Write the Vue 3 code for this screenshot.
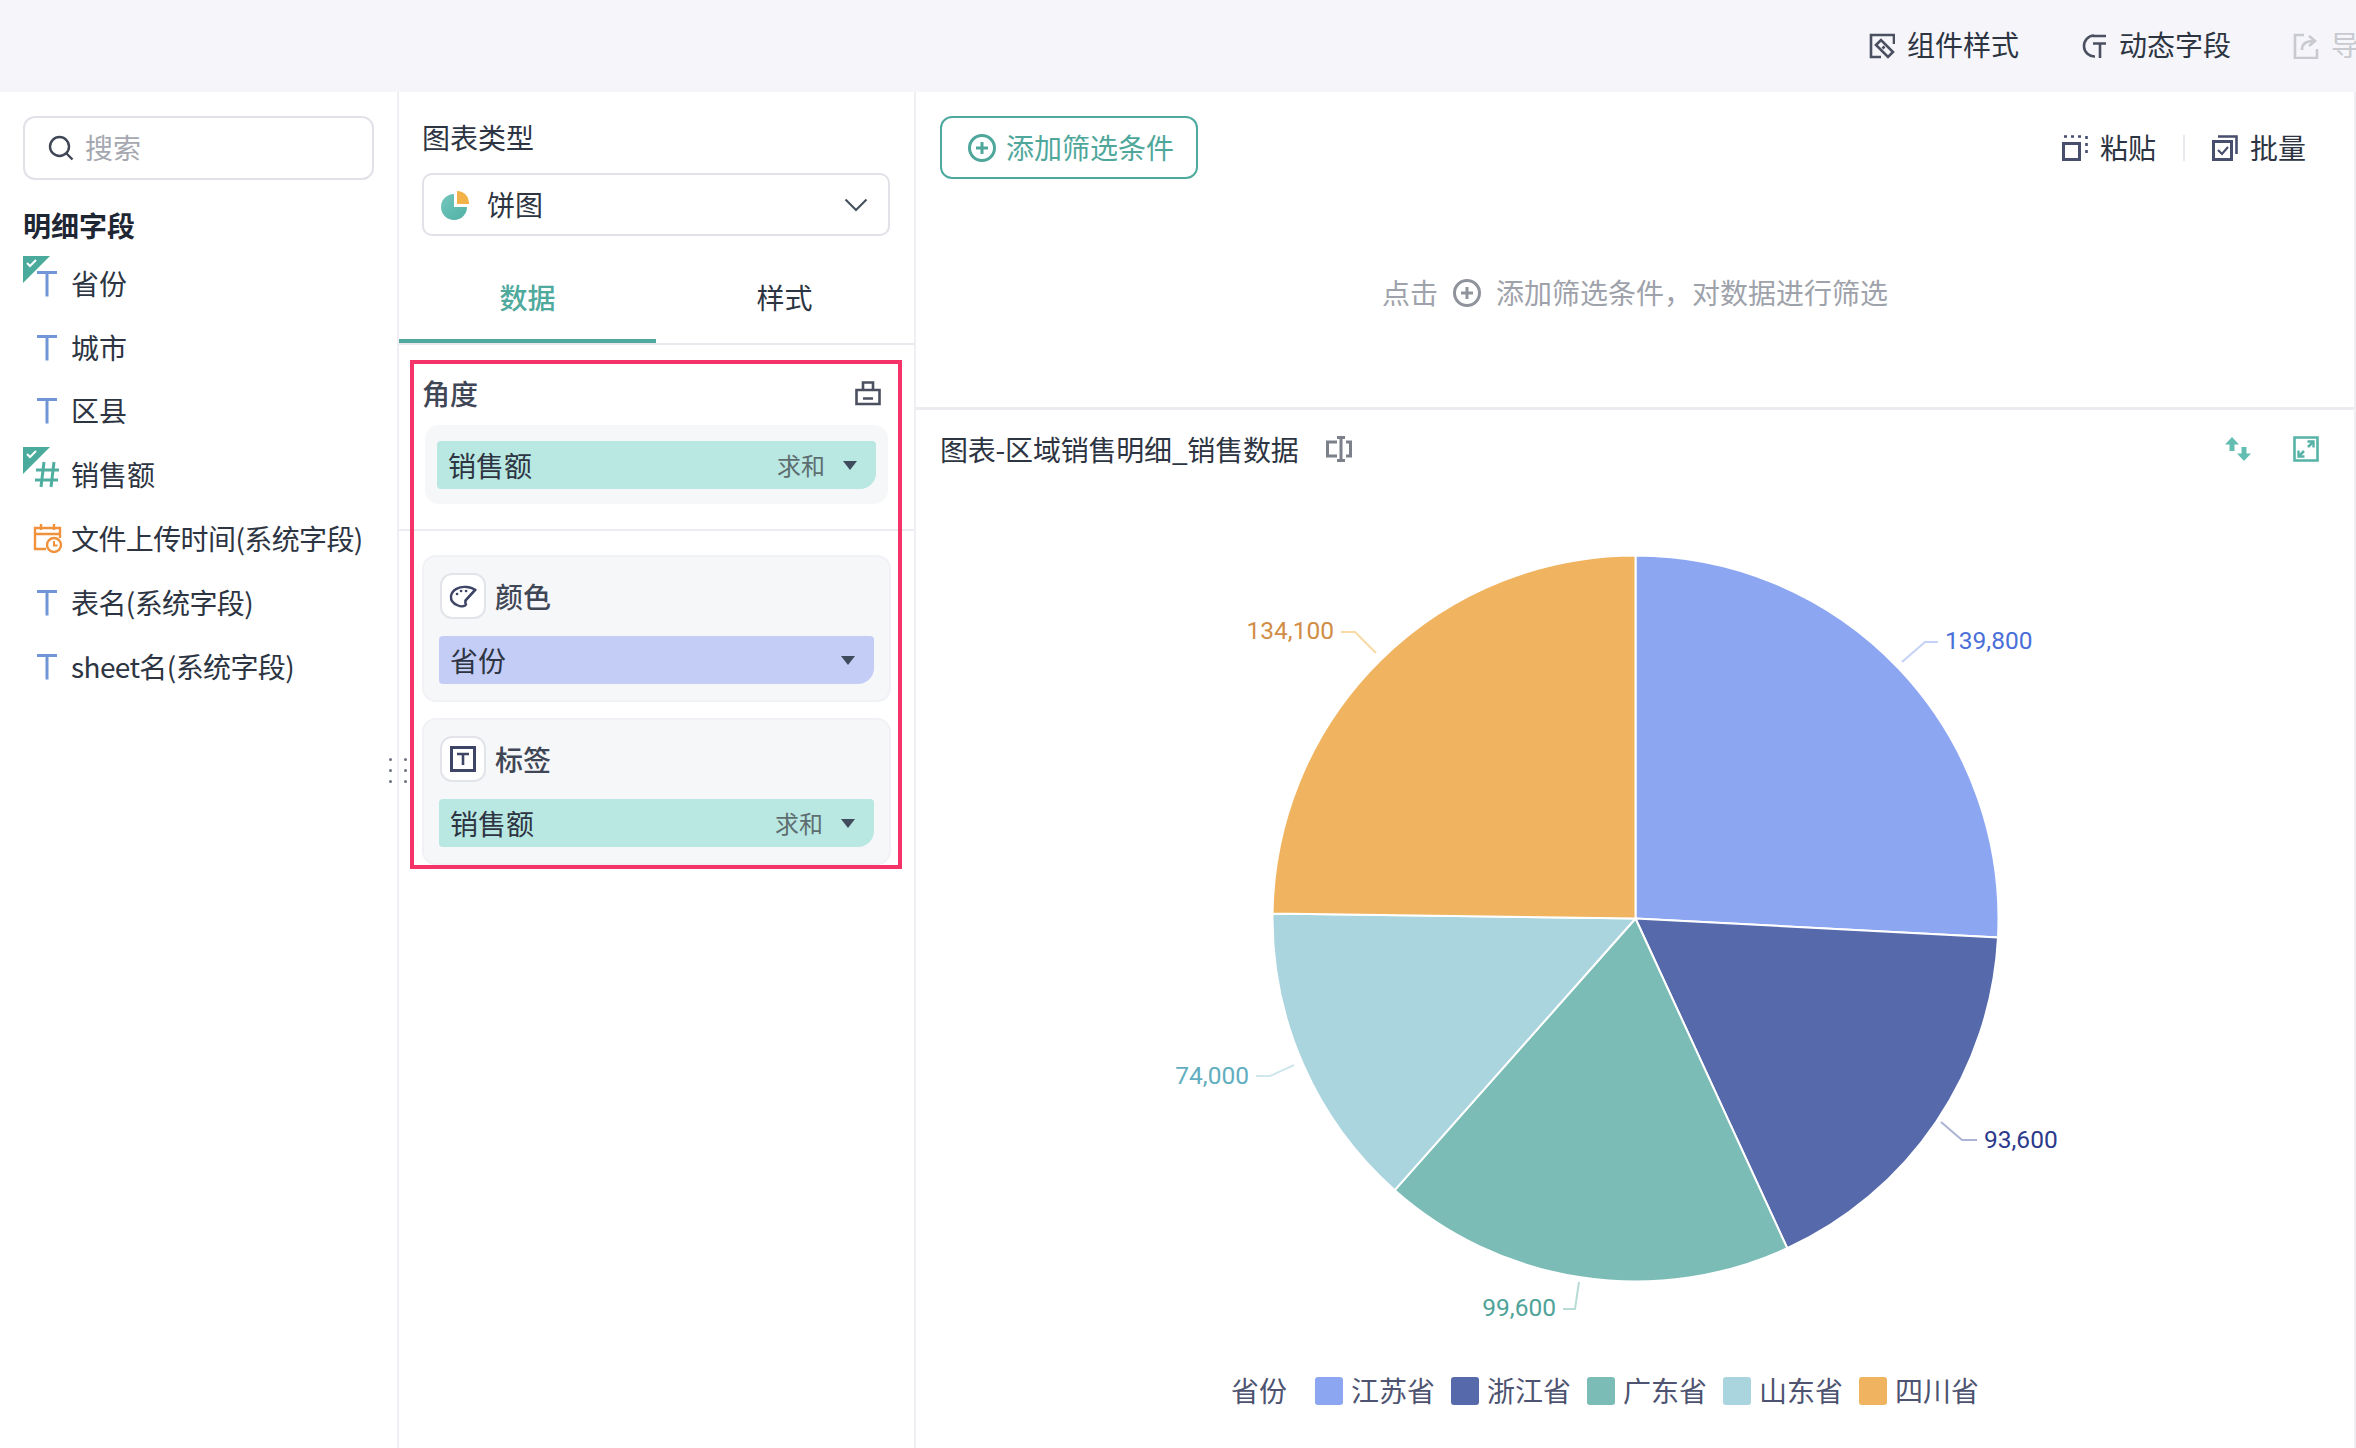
<script setup>
const fields = [
  { name: '省份', icon: 't', used: true },
  { name: '城市', icon: 't' },
  { name: '区县', icon: 't' },
  { name: '销售额', icon: 'hash', used: true },
  { name: '文件上传时间(系统字段)', icon: 'date', sys: true },
  { name: '表名(系统字段)', icon: 't', sys: true },
  { name: 'sheet名(系统字段)', icon: 't', sys: true }
]

const cx = 1635.5
const cy = 918.5
const r = 363
const data = [
  { name: '江苏省', value: 139800, color: '#8da6f2' },
  { name: '浙江省', value: 93600, color: '#5669ab' },
  { name: '广东省', value: 99600, color: '#7cbcb7' },
  { name: '山东省', value: 74000, color: '#abd5de' },
  { name: '四川省', value: 134100, color: '#f0b35f' }
]
const total = data.reduce((s, d) => s + d.value, 0)
let acc = 0
const slices = data.map((d) => {
  const a0 = (acc / total) * 2 * Math.PI
  acc += d.value
  const a1 = (acc / total) * 2 * Math.PI
  const p = (a) => `${(cx + r * Math.sin(a)).toFixed(2)} ${(cy - r * Math.cos(a)).toFixed(2)}`
  const large = a1 - a0 > Math.PI ? 1 : 0
  return { ...d, d: `M${cx} ${cy} L${p(a0)} A${r} ${r} 0 ${large} 1 ${p(a1)} Z` }
})

const labels = [
  { text: '139,800', x: 1945, y: 640, anchor: 'start', color: '#4a6fd8', line: '1902,662 1925,642 1938,642', lc: '#c5d2f8' },
  { text: '93,600', x: 1984, y: 1139, anchor: 'start', color: '#2c3a8c', line: '1941,1122 1962,1140 1977,1140', lc: '#aab4d4' },
  { text: '99,600', x: 1556, y: 1307, anchor: 'end', color: '#4fa398', line: '1563,1309 1575,1309 1579,1282', lc: '#b7dcd6' },
  { text: '74,000', x: 1249, y: 1075, anchor: 'end', color: '#61aec0', line: '1256,1076 1270,1076 1294,1065', lc: '#cfe6ec' },
  { text: '134,100', x: 1334, y: 630, anchor: 'end', color: '#d18d45', line: '1341,632 1355,632 1376,653', lc: '#fbd9a5' }
]
</script>

<template>
  <div class="page">
    <header class="topbar">
      <div class="top-item">
        <svg class="ic26" viewBox="0 0 26 26" fill="none" stroke="#4a5060" stroke-width="2.600">
          <path d="M25 11V2H2v22h10" />
          <path d="M7 12l5-5 12 12-5 5z" />
          <path d="M13.500 15.500l2-2" />
        </svg>
        <span>组件样式</span>
      </div>
      <div class="top-item">
        <svg class="ic26" viewBox="0 0 26 26" fill="none" stroke="#4a5060" stroke-width="2.600">
          <path d="M13 2.500A10.500 10.500 0 1 0 14 23.500" />
          <path d="M12 3h13M12 10.500h13M19 10.500V25" />
        </svg>
        <span>动态字段</span>
      </div>
      <div class="top-item disabled">
        <svg class="ic26" viewBox="0 0 26 26" fill="none" stroke="#c8cacf" stroke-width="2.600">
          <path d="M11 2H2v23h22v-9" />
          <path d="M9 17c0-6 4-9 11-9M16 3l6 5-6 5" />
        </svg>
        <span>导出</span>
      </div>
    </header>

    <main class="main">
      <aside class="fields">
        <div class="search">
          <svg class="search-ic" viewBox="0 0 26 26" fill="none" stroke="#3f4656" stroke-width="2.400">
            <circle cx="11.500" cy="11.500" r="9.500" />
            <path d="M18.500 18.500l6 6" />
          </svg>
          <span>搜索</span>
        </div>
        <div class="fields-title">明细字段</div>
        <div v-for="f in fields" :key="f.name" class="field">
          <svg v-if="f.used" class="badge" viewBox="0 0 27 27">
            <path d="M0 0h27L0 27z" fill="#4aab9c" />
            <path d="M4 7l3 3 6-6" fill="none" stroke="#fff" stroke-width="2" />
          </svg>
          <svg v-if="f.icon === 't'" class="ficon" viewBox="0 0 34 34" fill="none" stroke="#7096d8" stroke-width="3">
            <path d="M7 6.500h20M17 6.500v24" />
          </svg>
          <svg v-else-if="f.icon === 'hash'" class="ficon" viewBox="0 0 34 34" fill="none" stroke="#4fae9f" stroke-width="3">
            <path d="M14 5l-3 25M24 5l-3 25M6 13h23M5 23h23" />
          </svg>
          <svg v-else class="ficon" viewBox="0 0 34 34" fill="none" stroke="#f0913c" stroke-width="2.400">
            <path d="M16 28H5V7h25v10" />
            <path d="M5 13h25M11 3v6M24 3v6" />
            <circle cx="24" cy="24" r="7" fill="#fff" />
            <path d="M24 20v4.500h3.500" stroke-width="2" />
          </svg>
          <span :class="{ sys: f.sys }">{{ f.name }}</span>
        </div>
        <div class="handle" aria-hidden="true">
          <i v-for="n in 6" :key="n"></i>
        </div>
      </aside>

      <section class="config">
        <div class="config-label">图表类型</div>
        <div class="select">
          <svg class="pie-ic" viewBox="0 0 30 30">
            <defs>
              <linearGradient id="tealg" x1="0" y1="0" x2="1" y2="1">
                <stop offset="0" stop-color="#74c7bd" />
                <stop offset="1" stop-color="#4fb0a5" />
              </linearGradient>
            </defs>
            <path d="M14 4a13 13 0 1 0 13 13H14z" fill="url(#tealg)" />
            <path d="M17 1a12 12 0 0 1 12 13H17z" fill="#f3b149" />
          </svg>
          <span>饼图</span>
          <svg class="chev" viewBox="0 0 24 14" fill="none" stroke="#4a5060" stroke-width="2.200">
            <path d="M1.500 1.500L12 12 22.500 1.500" />
          </svg>
        </div>

        <div class="tabs">
          <div class="tab active">数据</div>
          <div class="tab">样式</div>
        </div>

        <div class="angle-head">
          <span>角度</span>
          <svg class="ic26" viewBox="0 0 26 26" fill="none" stroke="#4a5060" stroke-width="2.600">
            <path d="M1.500 10h23v14h-23zM8 10V2.500h10V10M8 18.500h10" />
          </svg>
        </div>
        <div class="well">
          <div class="pill teal">
            <span class="pill-name">销售额</span>
            <span class="agg">求和</span>
            <i class="caret"></i>
          </div>
        </div>
        <div class="rule"></div>

        <div class="card">
          <div class="card-head">
            <div class="card-ic">
              <svg viewBox="0 0 28 26" width="28" height="26" fill="none" stroke="#3f4566" stroke-width="2.400">
                <path d="M2 13C3 7 10 3 18 4c4 .5 7 2 8 3l-9 10c-1 1.500-1 3 0 4.500-1 2-5 2.500-8 1C5 21 1.500 18 2 13z" />
                <path d="M27 6L16 18" />
                <path d="M8 11h.1M12 8h.1M17 8h.1" stroke-width="2.600" stroke-linecap="round" />
              </svg>
            </div>
            <span>颜色</span>
          </div>
          <div class="pill blue">
            <span class="pill-name">省份</span>
            <i class="caret"></i>
          </div>
        </div>

        <div class="card">
          <div class="card-head">
            <div class="card-ic">
              <svg viewBox="0 0 26 26" width="26" height="26" fill="none" stroke="#3f4566" stroke-width="3">
                <path d="M1.500 1.500h23v23h-23z" />
                <path d="M7 8h12M13 8v11" stroke-width="2.600" />
              </svg>
            </div>
            <span>标签</span>
          </div>
          <div class="pill teal">
            <span class="pill-name">销售额</span>
            <span class="agg">求和</span>
            <i class="caret"></i>
          </div>
        </div>

        <div class="red-box" aria-hidden="true"></div>
      </section>

      <section class="stage">
        <div class="filter">
          <div class="filter-bar">
            <div class="add-btn">
              <svg class="ic28" viewBox="0 0 28 28" fill="none" stroke="#4fa79b" stroke-width="3">
                <circle cx="14" cy="14" r="12.500" />
                <path d="M14 8v12M8 14h12" />
              </svg>
              <span>添加筛选条件</span>
            </div>
            <div class="tools">
              <svg class="ic26" viewBox="0 0 26 26" fill="none" stroke="#474e6e" stroke-width="3">
                <path d="M1.500 8.500h16v16h-16z" />
                <path d="M2 1.500h3M9 1.500h3M16 1.500h3M24.500 1v3M24.500 8v3M24.500 15v3" stroke-width="2.600" />
              </svg>
              <span>粘贴</span>
              <i class="tool-sep"></i>
              <svg class="ic26" viewBox="0 0 26 26" fill="none" stroke="#474e6e" stroke-width="3">
                <path d="M1.500 6.500h18v18h-18z" />
                <path d="M6 1.500h18.500V19" stroke-width="2.600" />
                <path d="M6 15l4 4 6-7" stroke-width="2.200" />
              </svg>
              <span>批量</span>
            </div>
          </div>
          <div class="hint">
            <span>点击</span>
            <svg class="ic28" viewBox="0 0 28 28" fill="none" stroke="#8f939b" stroke-width="3">
              <circle cx="14" cy="14" r="12.500" />
              <path d="M14 8v12M8 14h12" />
            </svg>
            <span>添加筛选条件，对数据进行筛选</span>
          </div>
        </div>

        <div class="chart">
          <div class="chart-head">
            <span class="chart-title">图表-区域销售明细_销售数据</span>
            <svg class="rename ic26" viewBox="0 0 26 26" fill="none" stroke="#7b808a" stroke-width="3">
              <path d="M11 6H1.500v14H11M20 6h4.500v14H20" />
              <path d="M11 1.500h8M11 24.500h8M15 1.500v23" />
            </svg>
            <div class="chart-actions">
              <svg class="ic26" viewBox="0 0 26 26" fill="#63bdb1">
                <path d="M7 1l7 7.500H9.500V15h-5V8.500H0z" />
                <path d="M19 25l7-7.500h-4.500V11h-5v6.500H12z" />
              </svg>
              <svg class="ic26" viewBox="0 0 26 26" fill="none" stroke="#57b3a7" stroke-width="2.600">
                <path d="M1.500 1.500h23v23h-23z" />
                <path d="M15 11l5-5M6 20l5-5" />
                <path d="M14.500 5.500h6v6M5.500 14.500v6h6" stroke-width="2.400" />
              </svg>
            </div>
          </div>

          <svg class="pie" viewBox="916 488 1438 872" width="1438" height="872">
            <path v-for="s in slices" :key="s.name" :d="s.d" :fill="s.color" stroke="#fff" stroke-width="2" />
            <g v-for="l in labels" :key="l.text">
              <polyline :points="l.line" fill="none" :stroke="l.lc" stroke-width="2" />
              <text :x="l.x" :y="l.y + 8.500" :text-anchor="l.anchor" :fill="l.color" class="pie-label">{{ l.text }}</text>
            </g>
          </svg>

          <div class="legend">
            <span class="legend-title">省份</span>
            <div v-for="d in data" :key="d.name" class="legend-item">
              <i class="swatch" :style="{ background: d.color }"></i>
              <span>{{ d.name }}</span>
            </div>
          </div>
        </div>
      </section>
    </main>
  </div>
</template>

<style>
html, body { margin: 0; background: #fff; }
</style>

<style scoped>
* { box-sizing: border-box; }
.page {
  width: 2356px;
  height: 1448px;
  overflow: hidden;
  display: flex;
  flex-direction: column;
  background: #fff;
  color: #2d3442;
  font-family: "Noto Sans CJK SC", Roboto, sans-serif;
  font-size: 28px;
  line-height: 40px;
}
.ic26 { width: 26px; height: 26px; flex: none; }
.ic28 { width: 28px; height: 28px; flex: none; }

.topbar {
  height: 92px;
  flex: none;
  background: #f5f5fa;
  display: flex;
  align-items: center;
  justify-content: flex-end;
  gap: 62px;
  overflow: hidden;
}
.top-item { display: flex; align-items: center; gap: 12px; white-space: nowrap; }
.top-item > span { margin-top: -4px; }
.top-item.disabled { color: #c8cacf; margin-right: -31px; }

.main { flex: 1; display: flex; min-height: 0; }

.fields {
  width: 399px;
  flex: none;
  border-right: 2px solid #eeeef3;
  position: relative;
}
.search {
  margin: 24px 23px 0;
  width: 351px;
  height: 64px;
  border: 2px solid #e1e2e8;
  border-radius: 12px;
  display: flex;
  align-items: center;
  padding-left: 23px;
  gap: 11px;
  color: #a5a8b0;
}
.search > span { margin-top: -2px; }
.search-ic { width: 26px; height: 26px; }
.fields-title { margin: 25px 0 6px 23px; font-weight: 600; color: #1f2633; }
.field {
  position: relative;
  height: 63.8px;
  display: flex;
  align-items: center;
  padding-left: 30px;
  gap: 7px;
  white-space: nowrap;
}
.sys { letter-spacing: -0.6px; }
.badge { position: absolute; left: 23px; top: 5px; width: 27px; height: 27px; z-index: 1; }
.ficon { width: 34px; height: 34px; flex: none; }
.handle {
  position: absolute;
  left: 389px;
  top: 666px;
  display: grid;
  grid-template-columns: 3px 3px;
  column-gap: 12px;
  row-gap: 8px;
}
.handle i { width: 3px; height: 3px; border-radius: 50%; background: #6b7280; }

.config {
  width: 517px;
  flex: none;
  border-right: 2px solid #eeeef3;
  position: relative;
  padding-top: 25px;
}
.config-label { margin-left: 23px; }
.select {
  margin: 16px 24px 0 23px;
  height: 63px;
  border: 2px solid #e1e2e8;
  border-radius: 10px;
  display: flex;
  align-items: center;
  padding: 0 20px 0 16px;
}
.select > span { margin-top: -2px; }
.pie-ic { width: 30px; height: 30px; margin-right: 17px; }
.chev { width: 24px; height: 14px; margin-left: auto; }

.tabs {
  margin-top: 15px;
  display: flex;
  border-bottom: 2px solid #e8e8ee;
  height: 94px;
}
.tab {
  width: 257px;
  height: 92px;
  display: flex;
  align-items: center;
  justify-content: center;
  border-bottom: 4px solid transparent;
  padding-top: 4px;
}
.tab.active { color: #4fa99c; border-bottom-color: #4fa99c; font-weight: 500; }

.angle-head {
  margin: 28px 33px 0 23px;
  display: flex;
  align-items: center;
  justify-content: space-between;
  font-weight: 500;
  color: #3f4656;
}
.well {
  margin: 12px 26px 0 26px;
  padding: 16px 12px 15px;
  background: #f6f7f9;
  border-radius: 14px;
}
.pill {
  height: 48px;
  border-radius: 4px 4px 16px 4px;
  display: flex;
  align-items: center;
  padding: 0 19px 0 11px;
}
.pill.teal { background: #b9e7e1; }
.pill.blue { background: #c4cdf6; }
.pill-name { flex: 1; }
.agg { font-size: 24px; color: #5e6e70; margin-right: 18px; }
.caret {
  width: 0;
  height: 0;
  border-left: 7px solid transparent;
  border-right: 7px solid transparent;
  border-top: 9px solid #3f4a5c;
}
.rule { margin-top: 25px; height: 2px; background: #ecedf2; }

.card {
  margin: 16px 23px 0;
  padding: 16px 15px;
  height: 147px;
  background: #f6f7f9;
  border: 2px solid #f1f2f5;
  border-radius: 14px;
}
.rule + .card { margin-top: 24px; }
.card-head { display: flex; align-items: center; gap: 9px; margin-left: 1px; font-weight: 500; color: #3f4656; }
.card-ic {
  width: 46px;
  height: 46px;
  background: #fff;
  border: 2px solid #e3e4ea;
  border-radius: 12px;
  display: flex;
  align-items: center;
  justify-content: center;
}
.card .pill { margin-top: 17px; font-weight: 400; color: #2d3442; }

.red-box {
  position: absolute;
  left: 11px;
  top: 268px;
  width: 492px;
  height: 509px;
  border: 4px solid #f43368;
  pointer-events: none;
}

.stage {
  flex: 1;
  min-width: 0;
  border-right: 2px solid #eeeef3;
  display: flex;
  flex-direction: column;
}
.filter { height: 318px; flex: none; border-bottom: 3px solid #ebebf0; padding-top: 24px; }
.filter-bar { display: flex; align-items: center; padding: 0 48px 0 24px; }
.add-btn {
  width: 258px;
  height: 63px;
  border: 2px solid #4eaa9f;
  border-radius: 12px;
  display: flex;
  align-items: center;
  padding-left: 26px;
  gap: 10px;
  color: #4fa79b;
}
.add-btn > span, .tools > span { margin-top: -2px; }
.tools { margin-left: auto; display: flex; align-items: center; gap: 12px; }
.tool-sep { width: 2px; height: 26px; background: #e8e9ee; margin: 0 15px; }
.hint {
  margin-top: 93px;
  display: flex;
  align-items: center;
  justify-content: center;
  gap: 15px;
  color: #9ea2aa;
}
.hint svg { margin-top: 2px; }

.chart { flex: 1; min-height: 0; }
.chart-head { height: 78px; display: flex; align-items: center; padding: 0 35px 0 24px; }
.chart-title { letter-spacing: -0.2px; }
.rename { margin-left: 27px; }
.chart-actions { margin-left: auto; display: flex; gap: 42px; }
.pie { display: block; }
.pie-label { font-size: 24.5px; font-family: Roboto, sans-serif; font-weight: 400; }
.legend {
  height: 60px;
  padding-top: 2px;
  display: flex;
  align-items: center;
  padding-left: 315px;
  color: #4d5370;
}
.legend span { margin-top: -2px; }
.legend-title { margin-right: 28px; }
.legend-item { display: flex; align-items: center; gap: 8px; margin-right: 16px; }
.swatch { width: 28px; height: 28px; border-radius: 3px; }
</style>
